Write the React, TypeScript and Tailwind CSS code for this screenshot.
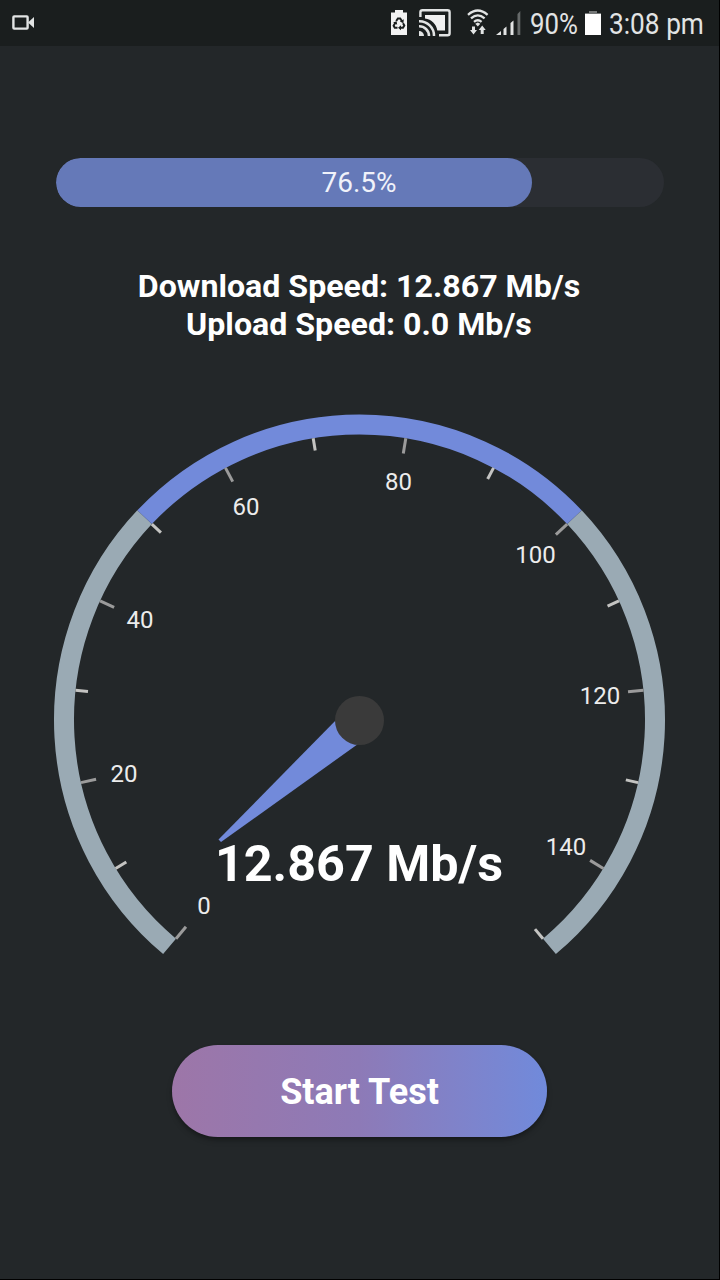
const CX = 359.5;
const CY = 320;
const OUTER = 305.5;
const INNER = 285.5;

function point(value: number, radius: number): [number, number] {
  const a = ((130 + (value / 150) * 280) * Math.PI) / 180;
  return [CX + radius * Math.cos(a), CY + radius * Math.sin(a)];
}

function arc(from: number, to: number) {
  const r = (OUTER + INNER) / 2;
  const [x1, y1] = point(from, r);
  const [x2, y2] = point(to, r);
  return `M${x1} ${y1}A${r} ${r} 0 0 1 ${x2} ${y2}`;
}

const ticks = Array.from({ length: 16 }, (_, i) => i * 10);

const labels = [
  { text: '0', x: 204, y: 514 },
  { text: '20', x: 124, y: 382 },
  { text: '40', x: 140, y: 228 },
  { text: '60', x: 246, y: 115 },
  { text: '80', x: 398.5, y: 90 },
  { text: '100', x: 535.5, y: 163 },
  { text: '120', x: 600, y: 304 },
  { text: '140', x: 566, y: 455 },
];

function Gauge() {
  return (
    <svg className="block h-[580px] w-[719px] shrink-0" viewBox="0 0 719 580" fill="none">
      <path d={arc(0, 50)} stroke="#9aaab4" strokeWidth="20" />
      <path d={arc(100, 150)} stroke="#9aaab4" strokeWidth="20" />
      <path d={arc(50, 100)} stroke="#728ada" strokeWidth="20" />
      {ticks.map((v) => {
        const major = v % 20 === 0;
        const [x1, y1] = point(v, INNER);
        const [x2, y2] = point(v, major ? 270 : 273);
        return (
          <line
            key={v}
            x1={x1}
            y1={y1}
            x2={x2}
            y2={y2}
            stroke={major ? '#9b9b9b' : '#c4c4c2'}
            strokeWidth="3"
          />
        );
      })}
      {labels.map((l) => (
        <text key={l.text} x={l.x} y={l.y} textAnchor="middle" fontSize="24" fill="#ececec">
          {l.text}
        </text>
      ))}
      <path d="M218.5 439.5 221 442 365 339 340 316Z" fill="#728ada" />
      <circle cx={CX} cy={CY + 0.5} r="24.5" fill="#3a3a3a" />
      <text x="359" y="481" textAnchor="middle" fontSize="50.3" fontWeight="700" fill="#fff">
        12.867 Mb/s
      </text>
    </svg>
  );
}

function StatusBar() {
  return (
    <header className="flex h-[46px] shrink-0 items-start bg-[#1a1e1e] text-[#e2e4e4]">
      <svg className="ml-3 mt-[15px] h-4 w-[23px]" viewBox="0 0 23 16" fill="none">
        <rect x="1.4" y="1.4" width="14.2" height="12.2" rx="0.8" stroke="currentColor" strokeWidth="2.4" />
        <path d="M16 7.5 22 2v11Z" fill="currentColor" />
      </svg>

      <svg className="ml-[355px] mt-[10px] h-[25px] w-[18px]" viewBox="0 0 18 25">
        <path d="M1 2.5h4V0h8v2.5h4V25H1Z" fill="#f2f2f2" />
        <g fill="none" stroke="#1a1e1e" strokeWidth="2">
          <path d="m6.2 11 1.7-2.5h2.3l2 3" />
          <path d="m13 13.3 1.3 2.3-1.3 2.2h-3" />
          <path d="M7.5 17.8H4.8l-1.2-2 1.9-3.2" />
        </g>
        <path d="m13.8 9.2-.4 4-3.5-1.6ZM11 15.3v5l-3-2.5ZM3.1 12.6l3.5-1.4.6 3.5Z" fill="#1a1e1e" />
      </svg>

      <svg className="ml-[11px] mt-[9px] h-[28px] w-[32px]" viewBox="0 0 32 28" fill="none">
        <path d="M1.4 8V3.2q0-2 2-2h25.2q2 0 2 2v21q0 2-2 2H20" stroke="#e2e4e4" strokeWidth="2.4" />
        <path d="M6 6h20v15.5h-7.7C17.5 15 12.5 10.2 6 9.4Z" fill="#f0f0f0" />
        <g stroke="#e2e4e4" strokeWidth="2.5">
          <path d="M0 12.2A14.5 14.5 0 0 1 15 27" />
          <path d="M0 17.2A9.8 9.8 0 0 1 10 27" />
        </g>
        <path d="M0 22a5 5 0 0 1 5 5H0Z" fill="#e2e4e4" />
      </svg>

      <svg className="ml-[16px] mt-[9px] h-[27px] w-[22px]" viewBox="0 0 22 27" fill="none">
        <g stroke="#e2e4e4" strokeWidth="2.3">
          <path d="M1 5.8q9.7-8.6 19.6 0" />
          <path d="M4 9.4q6.8-6 13.6 0" />
          <path d="M7 12.8q3.8-3.2 7.6 0" />
        </g>
        <path d="m8.3 14.8 2.5-1.4 2.5 1.4-2.5 2.6Z" fill="#e2e4e4" />
        <path d="M5 17.5h3V21h2l-3.5 4.5L3 21h2ZM13.7 25V21h-2l3.5-4.5 3.5 4.5h-2v4Z" fill="#e2e4e4" />
      </svg>

      <svg className="ml-[7px] mt-[10px] h-[25px] w-[26px]" viewBox="0 0 26 25">
        <path d="M0 25 5 21v4ZM7.5 19l3-2.5V25h-3ZM14.5 13l3-2.5V25h-3Z" fill="#e2e4e4" />
        <path d="m21.5 4 2.8-3v24h-2.8Z" fill="#666a6a" />
      </svg>

      <span className="ml-[8px] mt-[7px] w-[48px] origin-left scale-x-[0.86] whitespace-nowrap text-[30px] leading-[34px]">
        90%
      </span>

      <svg className="ml-[7px] mt-[11px] h-[24px] w-[16px]" viewBox="0 0 16 24">
        <path d="M4 0h8v2h4v2H0V2h4Z" fill="#747777" />
        <path d="M0 3h16v21H0Z" fill="#fff" />
      </svg>

      <span className="ml-[8px] mt-[7px] w-[96px] origin-left scale-x-[0.875] whitespace-nowrap text-[30px] leading-[34px]">
        3:08 pm
      </span>
    </header>
  );
}

export default function App() {
  const progress = 76.5;
  return (
    <div className="h-[1280px] w-[720px] overflow-hidden bg-black pb-px pr-px font-['Roboto',sans-serif]">
      <div className="flex h-full w-full flex-col bg-[#232729]">
        <StatusBar />
        <main className="flex flex-1 flex-col items-center">
          <div className="mt-[112px] grid h-[49px] w-[608px] shrink-0 overflow-hidden rounded-full bg-[#2b2e33]">
            <div
              className="col-start-1 row-start-1 h-full rounded-full bg-[#6579b8]"
              style={{ width: `${progress + 1.8}%` }}
            />
            <span className="col-start-1 row-start-1 self-center pr-px text-center text-[28px] leading-[33px] text-[#f0f2fa]">
              {progress}%
            </span>
          </div>

          <div className="mt-[60px] shrink-0 pr-px text-center text-[32.15px] font-bold leading-[38px] text-white">
            <p>Download Speed: 12.867 Mb/s</p>
            <p>Upload Speed: 0.0 Mb/s</p>
          </div>

          <div className="mt-[57px] h-[580px] shrink-0">
            <Gauge />
          </div>

          <button className="mt-[65px] h-[92px] w-[375px] shrink-0 rounded-full bg-linear-to-r from-[#9d76a8] via-[#8d7ab7] to-[#708adb] pt-px text-[36px] font-bold text-white shadow-md shadow-black/30">
            Start Test
          </button>
        </main>
      </div>
    </div>
  );
}
